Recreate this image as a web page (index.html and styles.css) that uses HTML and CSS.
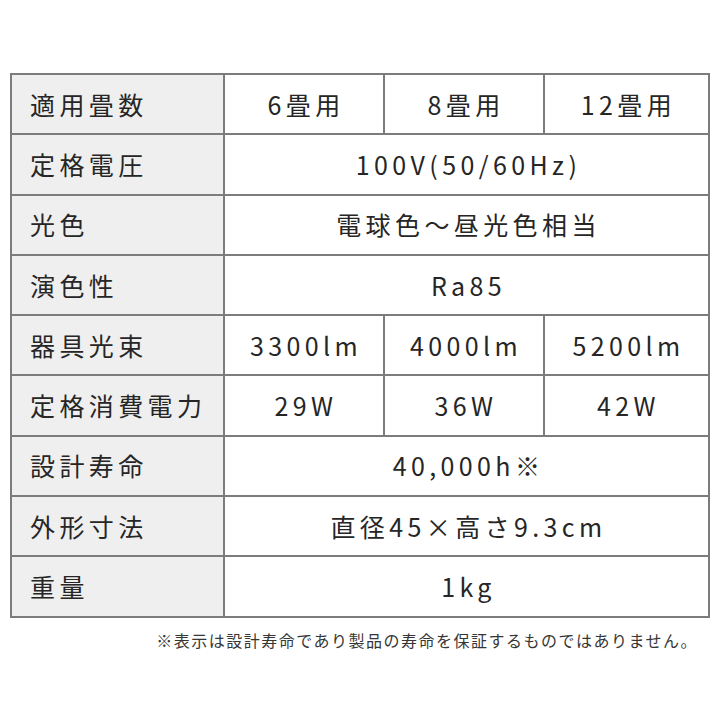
FILE: index.html
```html
<!DOCTYPE html>
<html lang="ja">
<head>
<meta charset="utf-8">
<title>仕様</title>
<link rel="stylesheet" href="styles.css">
</head>
<body>
<div class="page">
  <div class="spec">
    <div class="row">
      <div class="label">適用畳数</div>
      <div class="val">6畳用</div>
      <div class="val">8畳用</div>
      <div class="val">12畳用</div>
    </div>
    <div class="row">
      <div class="label">定格電圧</div>
      <div class="val span3">100V(50/60Hz)</div>
    </div>
    <div class="row">
      <div class="label">光色</div>
      <div class="val span3">電球色～昼光色相当</div>
    </div>
    <div class="row">
      <div class="label">演色性</div>
      <div class="val span3">Ra85</div>
    </div>
    <div class="row">
      <div class="label">器具光束</div>
      <div class="val">3300lm</div>
      <div class="val">4000lm</div>
      <div class="val">5200lm</div>
    </div>
    <div class="row">
      <div class="label">定格消費電力</div>
      <div class="val">29W</div>
      <div class="val">36W</div>
      <div class="val">42W</div>
    </div>
    <div class="row">
      <div class="label">設計寿命</div>
      <div class="val span3">40,000h※</div>
    </div>
    <div class="row">
      <div class="label">外形寸法</div>
      <div class="val span3">直径45×高さ9.3cm</div>
    </div>
    <div class="row">
      <div class="label">重量</div>
      <div class="val span3">1kg</div>
    </div>
  </div>
  <p class="note">※表示は設計寿命であり製品の寿命を保証するものではありません。</p>
</div>
</body>
</html>
```

FILE: styles.css
```css
html, body {
  margin: 0;
  padding: 0;
  background: #ffffff;
}
body {
  font-family: "Noto Sans CJK JP", "Noto Sans", sans-serif;
  color: #262626;
}
.page {
  width: 720px;
  height: 720px;
  padding-top: 73px;
  box-sizing: border-box;
}
.spec {
  margin-left: 10px;
  width: 700px;
  box-sizing: border-box;
  border-top: 2px solid #7c7c7c;
  border-left: 2px solid #7c7c7c;
}
.row {
  display: grid;
  grid-template-columns: 213px 160px 160px 165px;
  height: 60.3px;
}
.row > div {
  box-sizing: border-box;
  border-right: 2px solid #7c7c7c;
  border-bottom: 2px solid #7c7c7c;
  display: flex;
  align-items: center;
  font-size: 25px;
  letter-spacing: 4.4px;
  line-height: 1;
}
.label {
  background: #efefef;
  padding-left: 18px;
}
.val {
  justify-content: center;
  padding-left: 4px;
}
.span3 {
  grid-column: 2 / 5;
}
.note {
  margin: 10px 0 0 0;
  padding-right: 22px;
  text-align: right;
  font-size: 16px;
  letter-spacing: 1.5px;
  color: #363636;
}
```
